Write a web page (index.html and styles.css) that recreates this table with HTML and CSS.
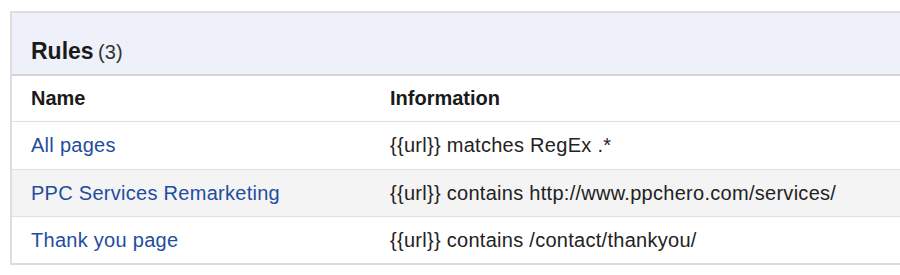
FILE: index.html
```html
<!DOCTYPE html>
<html>
<head>
<meta charset="utf-8">
<link rel="stylesheet" href="styles.css">
</head>
<body>
<div class="panel">
  <div class="panel-head"><span class="title">Rules</span> <span class="count">(3)</span></div>
  <div class="row row-head">
    <div class="cell c1">Name</div>
    <div class="cell c2">Information</div>
  </div>
  <div class="row r1">
    <div class="cell c1"><a class="link" href="#">All pages</a></div>
    <div class="cell c2">{{url}} matches RegEx .*</div>
  </div>
  <div class="row alt">
    <div class="cell c1"><a class="link" href="#">PPC Services Remarketing</a></div>
    <div class="cell c2">{{url}} contains http://www.ppchero.com/services/</div>
  </div>
  <div class="row last">
    <div class="cell c1"><a class="link" href="#">Thank you page</a></div>
    <div class="cell c2">{{url}} contains /contact/thankyou/</div>
  </div>
</div>
</body>
</html>
```

FILE: styles.css
```css
html, body {
  margin: 0;
  padding: 0;
  background: #ffffff;
}
body {
  font-family: "Liberation Sans", Arial, sans-serif;
  color: #222222;
  overflow: hidden;
}
.panel {
  margin: 11px 0 0 10px;
  width: 920px;
  border: 2px solid #dedede;
  border-right: none;
  border-bottom: 2px solid #dcdcdc;
}
.panel-head {
  height: 63px;
  box-sizing: border-box;
  padding: 24px 0 0 19px;
  background: #eef1f9;
  border-bottom: 2px solid #d6d6d6;
  line-height: 28px;
}
.title {
  font-size: 23px;
  font-weight: bold;
  color: #1a1a1a;
}
.count {
  font-size: 20px;
  color: #333333;
}
.row {
  display: grid;
  grid-template-columns: 378px 1fr;
  height: 47px;
  box-sizing: border-box;
  border-bottom: 1px solid #e0e0e0;
  align-items: center;
  font-size: 20px;
  letter-spacing: 0.28px;
}
.row.r1 {
  height: 48px;
}
.row.alt {
  background: #f4f4f4;
}
.row.last {
  border-bottom: none;
  height: 46px;
}
.row-head {
  height: 46px;
  font-weight: bold;
  color: #1a1a1a;
  letter-spacing: 0;
}
.cell.c1 {
  padding-left: 19px;
}
.link {
  color: #1f4d9e;
  text-decoration: none;
}
```
